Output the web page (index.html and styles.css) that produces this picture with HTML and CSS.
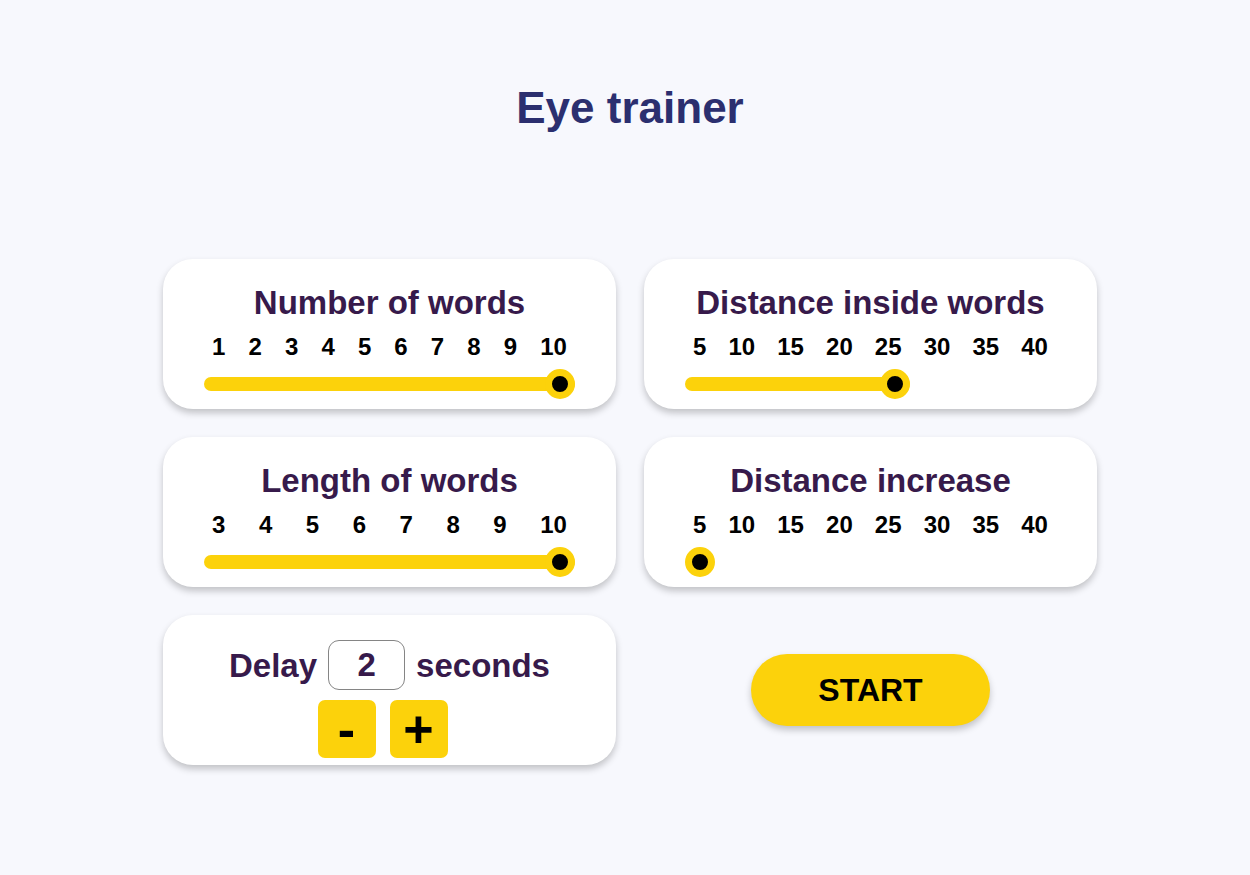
FILE: index.html
```html
<!DOCTYPE html>
<html lang="en">
<head>
<meta charset="utf-8">
<title>Eye trainer</title>
<link rel="stylesheet" href="styles.css">
</head>
<body>
<main class="app">
  <h1 class="title">Eye trainer</h1>
  <section class="grid">
    <div class="card">
      <h2 class="card-title">Number of words</h2>
      <div class="labels"><span>1</span><span>2</span><span>3</span><span>4</span><span>5</span><span>6</span><span>7</span><span>8</span><span>9</span><span>10</span></div>
      <div class="slider"><div class="fill" style="width: 100%"><span class="thumb"></span></div></div>
    </div>
    <div class="card">
      <h2 class="card-title">Distance inside words</h2>
      <div class="labels"><span>5</span><span>10</span><span>15</span><span>20</span><span>25</span><span>30</span><span>35</span><span>40</span></div>
      <div class="slider"><div class="fill" style="width: calc(30px + (100% - 30px) * 0.5714)"><span class="thumb"></span></div></div>
    </div>
    <div class="card">
      <h2 class="card-title">Length of words</h2>
      <div class="labels"><span>3</span><span>4</span><span>5</span><span>6</span><span>7</span><span>8</span><span>9</span><span>10</span></div>
      <div class="slider"><div class="fill" style="width: 100%"><span class="thumb"></span></div></div>
    </div>
    <div class="card">
      <h2 class="card-title">Distance increase</h2>
      <div class="labels"><span>5</span><span>10</span><span>15</span><span>20</span><span>25</span><span>30</span><span>35</span><span>40</span></div>
      <div class="slider"><div class="fill fill-empty" style="width: 30px"><span class="thumb"></span></div></div>
    </div>
    <div class="card card-delay">
      <div class="delay-row">
        <span class="delay-text">Delay</span>
        <span class="delay-input">2</span>
        <span class="delay-text">seconds</span>
      </div>
      <div class="delay-buttons">
        <button class="step-btn">-</button>
        <button class="step-btn">+</button>
      </div>
    </div>
    <div class="start-cell">
      <button class="start-btn">START</button>
    </div>
  </section>
</main>
</body>
</html>
```
FILE: styles.css
```css
* { box-sizing: border-box; }
html, body { margin: 0; padding: 0; }
body {
  background: #f7f8fd;
  font-family: "Liberation Sans", Arial, sans-serif;
  width: 1250px;
  height: 875px;
  overflow: hidden;
}
.app {
  display: flex;
  flex-direction: column;
  align-items: center;
  padding-top: 83px;
  padding-left: 10px;
}
.title {
  margin: 0;
  font-size: 44px;
  line-height: 50px;
  font-weight: 700;
  color: #2b2f6f;
}
.grid {
  margin-top: 126px;
  display: grid;
  grid-template-columns: 453px 453px;
  grid-auto-rows: 150px;
  column-gap: 28px;
  row-gap: 28px;
}
.card {
  background: #ffffff;
  border-radius: 30px;
  box-shadow: 0 4px 7px rgba(0, 0, 0, 0.22);
  display: flex;
  flex-direction: column;
  align-items: center;
  padding-top: 25px;
}
.card-title {
  margin: 0;
  font-size: 33px;
  line-height: 37px;
  font-weight: 700;
  color: #371a4b;
}
.labels {
  margin-top: 12px;
  width: 371px;
  padding: 0 8px;
  display: flex;
  justify-content: space-between;
  font-size: 24px;
  line-height: 28px;
  font-weight: 700;
  color: #000;
}
.slider {
  margin-top: 8px;
  width: 371px;
  height: 30px;
  display: flex;
  align-items: center;
}
.fill {
  position: relative;
  height: 14px;
  background: #fcd20b;
  border-radius: 7px;
}
.fill-empty { background: transparent; }
.thumb {
  position: absolute;
  right: 0;
  top: -8px;
  width: 30px;
  height: 30px;
  border-radius: 50%;
  background: #000;
  border: 7px solid #fcd20b;
}
.card-delay {
  padding-top: 25px;
}
.delay-row {
  display: flex;
  align-items: center;
  gap: 11px;
}
.delay-text {
  font-size: 33px;
  font-weight: 700;
  color: #371a4b;
  line-height: 37px;
}
.delay-input {
  width: 77px;
  height: 50px;
  border: 1.5px solid #858585;
  border-radius: 11px;
  display: flex;
  align-items: center;
  justify-content: center;
  font-size: 33px;
  font-weight: 700;
  color: #371a4b;
}
.delay-buttons {
  margin-top: 10px;
  display: flex;
  gap: 14px;
  padding-right: 14px;
}
.step-btn {
  width: 58px;
  height: 58px;
  border: none;
  border-radius: 7px;
  background: #fcd20b;
  color: #000;
  font-family: "Liberation Sans", Arial, sans-serif;
  font-size: 52px;
  font-weight: 700;
  line-height: 1;
  padding: 0;
  display: flex;
  align-items: center;
  justify-content: center;
}
.start-cell {
  display: flex;
  align-items: center;
  justify-content: center;
}
.start-btn {
  width: 239px;
  height: 72px;
  border: none;
  border-radius: 36px;
  background: #fcd20b;
  box-shadow: 0 4px 7px rgba(0, 0, 0, 0.22);
  font-family: "Liberation Sans", Arial, sans-serif;
  font-size: 32px;
  font-weight: 700;
  color: #000;
  padding: 0;
}
```
